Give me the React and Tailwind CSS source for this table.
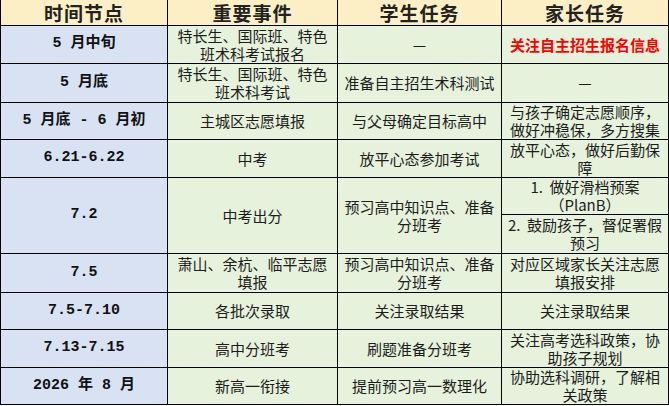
import React from 'react';

// colours picked from the screenshot
const HEAD = 'bg-[#fcefc6]';
const BLUE = 'bg-[#d9e2f3]';
const GREEN = 'bg-[#e6f2dc]';

const bodyFont = { fontFamily: '"Noto Sans CJK SC", sans-serif' };
const dateFont = { fontFamily: '"Liberation Mono", "Noto Sans CJK SC", monospace' };

const headers = ['时间节点', '重要事件', '学生任务', '家长任务'];

const rows = [
  { date: '5 月中旬', event: ['特长生、国际班、特色', '班术科考试报名'], student: ['—'], parent: ['关注自主招生报名信息'], red: true },
  { date: '5 月底', event: ['特长生、国际班、特色', '班术科考试'], student: ['准备自主招生术科测试'], parent: ['—'] },
  { date: '5 月底 - 6 月初', event: ['主城区志愿填报'], student: ['与父母确定目标高中'], parent: ['与孩子确定志愿顺序，', '做好冲稳保，多方搜集'] },
  { date: '6.21-6.22', event: ['中考'], student: ['放平心态参加考试'], parent: ['放平心态，做好后勤保', '障'] },
  {
    date: '7.2',
    event: ['中考出分'],
    student: ['预习高中知识点、准备', '分班考'],
    split: [['1.  做好滑档预案', '（PlanB）'], ['2.  鼓励孩子，督促署假', '预习']],
  },
  { date: '7.5', event: ['萧山、余杭、临平志愿', '填报'], student: ['预习高中知识点、准备', '分班考'], parent: ['对应区域家长关注志愿', '填报安排'] },
  { date: '7.5-7.10', event: ['各批次录取'], student: ['关注录取结果'], parent: ['关注录取结果'] },
  { date: '7.13-7.15', event: ['高中分班考'], student: ['刷题准备分班考'], parent: ['关注高考选科政策，协', '助孩子规划'] },
  { date: '2026 年 8 月', event: ['新高一衔接'], student: ['提前预习高一数理化'], parent: ['协助选科调研，了解相', '关政策'] },
];

function Lines({ lines }) {
  return (
    <div className="text-center leading-[18px]">
      {lines.map((l, i) => (
        <div key={i} className="whitespace-pre">{l}</div>
      ))}
    </div>
  );
}

function Cell({ children, bg = GREEN, span, className = '' }) {
  return (
    <div
      className={`${bg} ${span ? 'row-span-2' : ''} flex items-center justify-center text-[15px] text-[#1c1c1c] ${className}`}
      style={bodyFont}
    >
      {children}
    </div>
  );
}

export default function App() {
  return (
    <div className="w-[669px] h-[406px] bg-white">
      <div className="grid w-[669px] grid-cols-[166px_169px_163px_166px] grid-rows-[25px_37px_38px_36px_37px_36px_38px_38px_36px_37px_36px] gap-px bg-black border-l border-r border-b border-black">
        {headers.map((h) => (
          <div
            key={h}
            className={`${HEAD} flex items-center justify-center text-[19px] leading-[24px] font-bold text-[#222] tracking-[1px]`}
            style={bodyFont}
          >
            {h}
          </div>
        ))}

        {rows.map((r) => (
          <React.Fragment key={r.date}>
            <div
              className={`${BLUE} ${r.split ? 'row-span-2' : ''} flex items-center justify-center text-[15px] font-bold text-[#111] whitespace-pre`}
              style={dateFont}
            >
              {r.date}
            </div>
            <Cell span={r.split}>
              <Lines lines={r.event} />
            </Cell>
            <Cell span={r.split}>
              <Lines lines={r.student} />
            </Cell>
            {r.split ? (
              <>
                <Cell>
                  <Lines lines={r.split[0]} />
                </Cell>
                <Cell>
                  <Lines lines={r.split[1]} />
                </Cell>
              </>
            ) : (
              <Cell className={r.red ? 'font-bold !text-[#f00]' : ''}>
                <Lines lines={r.parent} />
              </Cell>
            )}
          </React.Fragment>
        ))}
      </div>
    </div>
  );
}
